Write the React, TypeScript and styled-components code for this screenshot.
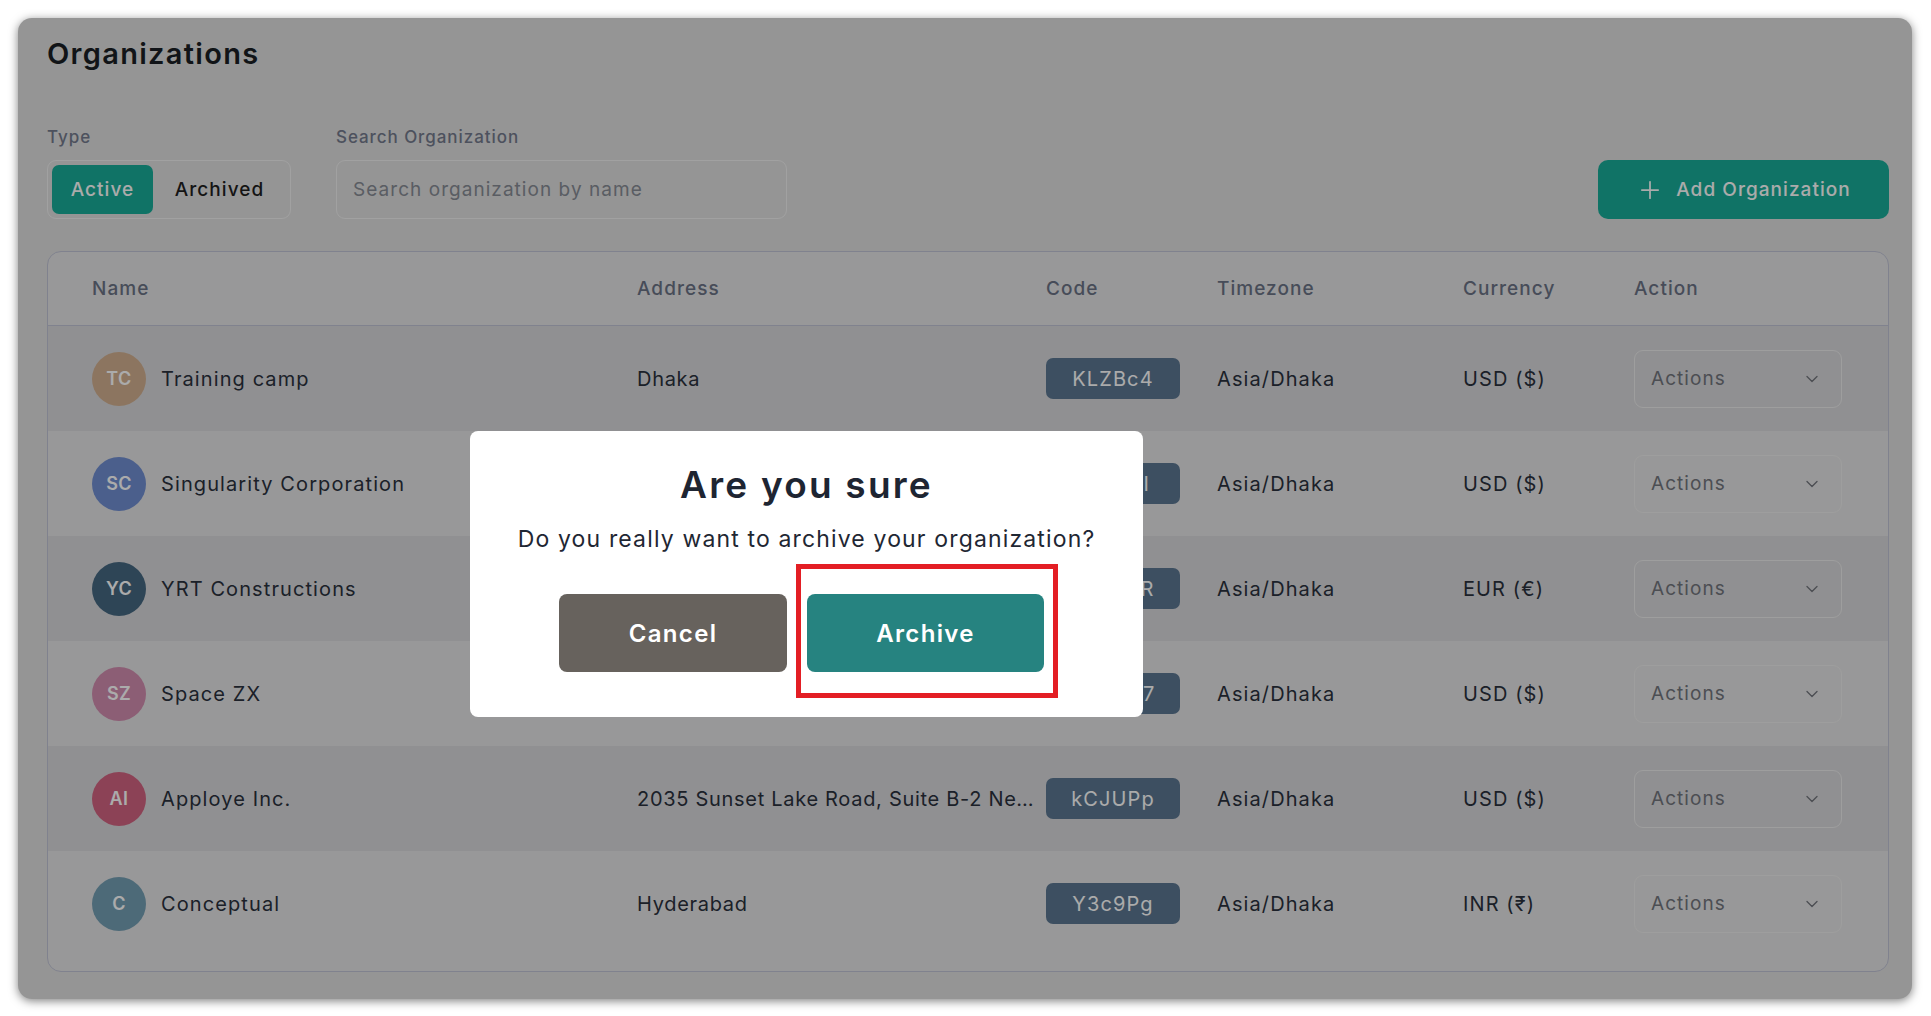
import React from 'react'
import styled, { createGlobalStyle } from 'styled-components'
import { Plus, ChevronDown } from 'lucide-react'

const GlobalStyle = createGlobalStyle`
  * {
    box-sizing: border-box;
    letter-spacing: 0.055em;
  }
  body {
    margin: 0;
    background: #fff;
    font-family: Inter, 'Noto Sans', sans-serif;
  }
`

const Page = styled.div`
  padding: 18px 19px 19px 18px;
`

const Card = styled.div`
  position: relative;
  background: #dedede;
  border-radius: 14px;
  box-shadow: 0 2px 10px rgba(0, 0, 0, 0.5);
  padding: 18px 23px 27px 29px;
  overflow: hidden;
`

const Title = styled.h1`
  margin: 0;
  font-size: 29px;
  line-height: 36px;
  font-weight: 600;
  letter-spacing: 0.045em;
  color: #1a1e24;
`

const Toolbar = styled.div`
  display: flex;
  align-items: flex-end;
  justify-content: space-between;
  margin-top: 55px;
`

const Filters = styled.div`
  display: flex;
  gap: 45px;
`

const Field = styled.div`
  display: flex;
  flex-direction: column;
`

const Label = styled.label`
  font-size: 17px;
  line-height: 20px;
  font-weight: 500;
  color: #737a8c;
  margin-bottom: 13px;
`

const Toggle = styled.div`
  display: flex;
  width: 244px;
  height: 59px;
  padding: 4px;
  border: 1px solid #f0f0f0;
  border-radius: 9px;
`

const ToggleButton = styled.button<{ $active?: boolean }>`
  border: none;
  border-radius: 7px;
  font-family: inherit;
  font-size: 19px;
  font-weight: 500;
  padding: 0 16px;
  background: ${p => (p.$active ? '#19ac98' : 'transparent')};
  color: ${p => (p.$active ? '#fff' : '#1e1e1e')};
  flex: ${p => (p.$active ? '0 0 101px' : '1')};
`

const SearchInput = styled.input`
  width: 451px;
  height: 59px;
  border: 1px solid #f0f0f0;
  border-radius: 9px;
  background: transparent;
  padding: 0 16px;
  font-family: inherit;
  font-size: 19px;
  outline: none;

  &::placeholder {
    color: #868b94;
  }
`

const AddButton = styled.button`
  display: flex;
  align-items: center;
  justify-content: center;
  gap: 12px;
  width: 291px;
  height: 59px;
  border: none;
  border-radius: 10px;
  background: #19ac98;
  color: #fff;
  font-family: inherit;
  font-size: 19px;
  font-weight: 500;
`

const Table = styled.div`
  margin-top: 32px;
  border: 1px solid #bfc2d4;
  border-radius: 14px;
  background: #e3e3e4;
  padding-bottom: 15px;
  overflow: hidden;
`

const GridRow = styled.div`
  display: grid;
  grid-template-columns: 545px 409px 171px 246px 171px 1fr;
  align-items: center;
  padding-left: 44px;
`

const HeaderRow = styled(GridRow)`
  height: 74px;
  border-bottom: 1px solid #bfc2d4;
  font-size: 19px;
  font-weight: 500;
  color: #6a7285;
`

const BodyRow = styled(GridRow)<{ $striped: boolean }>`
  height: 105px;
  background: ${p => (p.$striped ? '#d7d7da' : 'transparent')};
  font-size: 20px;
  color: #2a313d;
`

const NameCell = styled.div`
  display: flex;
  align-items: center;
  gap: 15px;
`

const Avatar = styled.div<{ $color: string }>`
  width: 54px;
  height: 54px;
  border-radius: 50%;
  background: ${p => p.$color};
  color: #fff;
  display: flex;
  align-items: center;
  justify-content: center;
  font-size: 18px;
  font-weight: 600;
  letter-spacing: 0.02em;
`

const AddressCell = styled.div`
  white-space: nowrap;
  overflow: hidden;
  text-overflow: ellipsis;
  padding-right: 12px;
  letter-spacing: 0.035em;
`

const Badge = styled.span`
  display: inline-flex;
  align-items: center;
  justify-content: center;
  width: 134px;
  height: 41px;
  border-radius: 7px;
  background: #5b7791;
  color: #fff;
  font-size: 20px;
`

const ActionSelect = styled.div`
  display: flex;
  align-items: center;
  justify-content: space-between;
  width: 208px;
  height: 58px;
  padding: 0 19px 0 16px;
  border: 1px solid #ececec;
  border-radius: 9px;
  color: #72757c;
  font-size: 19px;
`

const Overlay = styled.div`
  position: absolute;
  inset: 0;
  background: rgba(0, 0, 0, 0.33);
`

const Modal = styled.div`
  position: absolute;
  left: 452px;
  top: 413px;
  width: 673px;
  height: 286px;
  background: #fff;
  border-radius: 8px;
  padding-top: 32px;
  display: flex;
  flex-direction: column;
  align-items: center;
`

const ModalTitle = styled.h2`
  margin: 0;
  font-size: 37px;
  line-height: 44px;
  font-weight: 600;
  letter-spacing: 0.06em;
  color: #1e2532;
`

const ModalText = styled.p`
  margin: 17px 0 0;
  font-size: 23px;
  line-height: 30px;
  letter-spacing: 0.05em;
  color: #1f2733;
`

const ModalButtons = styled.div`
  display: flex;
  gap: 20px;
  margin-top: 40px;
  margin-right: 10px;
`

const ModalButton = styled.button<{ $variant: 'cancel' | 'archive' }>`
  position: relative;
  height: 78px;
  width: ${p => (p.$variant === 'cancel' ? '228px' : '237px')};
  border: none;
  border-radius: 8px;
  background: ${p => (p.$variant === 'cancel' ? '#67625d' : '#268380')};
  color: #fff;
  font-family: inherit;
  font-size: 24px;
  font-weight: 600;
`

const Highlight = styled.span`
  position: absolute;
  left: -11px;
  top: -30px;
  right: -14px;
  bottom: -26px;
  border: 5px solid #e31e24;
  pointer-events: none;
`

const rows = [
  { initials: 'TC', name: 'Training camp', address: 'Dhaka', code: 'KLZBc4', currency: 'USD ($)', color: '#d1af8f' },
  { initials: 'SC', name: 'Singularity Corporation', address: 'Singapore', code: 'Gq8sFI', currency: 'USD ($)', color: '#708ed1' },
  { initials: 'YC', name: 'YRT Constructions', address: 'Dhaka', code: 'Bm4tYR', currency: 'EUR (€)', color: '#456780' },
  { initials: 'SZ', name: 'Space ZX', address: 'Dhaka', code: 'Xa2Wq7', currency: 'USD ($)', color: '#d18caf' },
  { initials: 'AI', name: 'Apploye Inc.', address: '2035 Sunset Lake Road, Suite B-2 Newark, DE 19702', code: 'kCJUPp', currency: 'USD ($)', color: '#d16380' },
  { initials: 'C', name: 'Conceptual', address: 'Hyderabad', code: 'Y3c9Pg', currency: 'INR (₹)', color: '#749eb3' },
]

const App = () => {
  return <Page>
    <GlobalStyle />
    <Card>
      <Title>Organizations</Title>

      <Toolbar>
        <Filters>
          <Field>
            <Label>Type</Label>
            <Toggle>
              <ToggleButton $active>Active</ToggleButton>
              <ToggleButton>Archived</ToggleButton>
            </Toggle>
          </Field>
          <Field>
            <Label>Search Organization</Label>
            <SearchInput placeholder="Search organization by name" />
          </Field>
        </Filters>
        <AddButton>
          <Plus size={28} strokeWidth={1.5} />
          Add Organization
        </AddButton>
      </Toolbar>

      <Table>
        <HeaderRow>
          <div>Name</div>
          <div>Address</div>
          <div>Code</div>
          <div>Timezone</div>
          <div>Currency</div>
          <div>Action</div>
        </HeaderRow>
        {rows.map((row, index) => (
          <BodyRow key={`row${index}`} $striped={index % 2 === 0}>
            <NameCell>
              <Avatar $color={row.color}>{row.initials}</Avatar>
              {row.name}
            </NameCell>
            <AddressCell>{row.address}</AddressCell>
            <div><Badge>{row.code}</Badge></div>
            <div>Asia/Dhaka</div>
            <div>{row.currency}</div>
            <ActionSelect>
              Actions
              <ChevronDown size={20} strokeWidth={1.6} />
            </ActionSelect>
          </BodyRow>
        ))}
      </Table>

      <Overlay>
        <Modal>
          <ModalTitle>Are you sure</ModalTitle>
          <ModalText>Do you really want to archive your organization?</ModalText>
          <ModalButtons>
            <ModalButton $variant="cancel">Cancel</ModalButton>
            <ModalButton $variant="archive">
              Archive
              <Highlight />
            </ModalButton>
          </ModalButtons>
        </Modal>
      </Overlay>
    </Card>
  </Page>
}

export default App
